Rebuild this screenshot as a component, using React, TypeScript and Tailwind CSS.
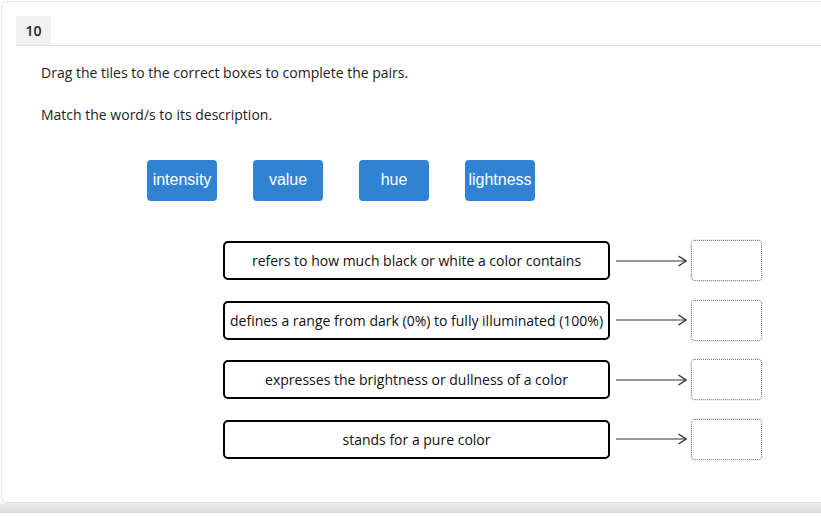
const tiles = ["intensity", "value", "hue", "lightness"];

const pairs = [
  "refers to how much black or white a color contains",
  "defines a range from dark (0%) to fully illuminated (100%)",
  "expresses the brightness or dullness of a color",
  "stands for a pure color",
];

function Arrow() {
  return (
    <svg width="71" height="12" viewBox="0 0 71 12" className="shrink-0">
      <line x1="0" y1="6" x2="70" y2="6" stroke="#333" strokeWidth="1" />
      <polyline points="62.5,1 70,6 62.5,11" fill="none" stroke="#333" strokeWidth="1.4" />
    </svg>
  );
}

export default function App() {
  return (
    <div className="h-[516px] w-[821px] overflow-hidden bg-white" style={{ fontFamily: "'Open Sans', sans-serif" }}>
      <div className="ml-[1px] mt-[1px] h-[502px] w-[840px] rounded-l-[5px] border border-[#e3e3e3] bg-white pl-[14px] pt-[14px]">
        {/* question number */}
        <div className="border-b border-[#e2e2e2]">
          <div className="flex h-[29px] w-[35px] items-center justify-center bg-[#f1f1f1] text-[14px] font-semibold text-[#222]">
            10
          </div>
        </div>

        <div className="pl-[25px] pt-[17px] text-[14px] text-[#222]">
          <p className="leading-[20px]">Drag the tiles to the correct boxes to complete the pairs.</p>
          <p className="mt-[22px] leading-[20px]">Match the word/s to its description.</p>
        </div>

        {/* tiles */}
        <div className="ml-[131px] mt-[35px] flex gap-[36px]">
          {tiles.map((t) => (
            <div
              key={t}
              className="flex h-[41px] w-[70px] items-center justify-center rounded-[4px] bg-[#3083d3] pb-[2px] text-[16px] text-white"
              style={{ fontFamily: "'Liberation Sans', Arial, sans-serif" }}
            >
              {t}
            </div>
          ))}
        </div>

        {/* pairs */}
        <div className="ml-[207px] mt-[39px] flex flex-col gap-[18.5px]">
          {pairs.map((p) => (
            <div key={p} className="flex h-[41px] items-center">
              <div className="flex h-[39px] w-[387px] items-center justify-center whitespace-nowrap rounded-[5px] border-2 border-black text-[14px] text-[#111]">
                {p}
              </div>
              <div className="ml-[6px]">
                <Arrow />
              </div>
              <div className="ml-[4px] h-[41px] w-[71px] rounded-[4px] border border-dotted border-[#7a7a7a] shadow-[0_0_0_1px_#f0f0f0]" />
            </div>
          ))}
        </div>
      </div>
      <div className="h-[10px] w-full bg-gradient-to-b from-[#ececec] to-[#d9d9d9]" />
    </div>
  );
}
